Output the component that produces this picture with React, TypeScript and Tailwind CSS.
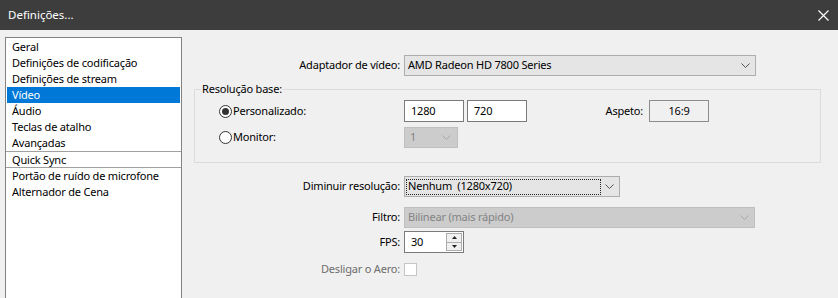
function Chevron({ color }: { color: string }) {
  return (
    <svg width="9" height="5" viewBox="0 0 9 5" className="shrink-0">
      <path d="M0.5 0.5 L4.5 4.5 L8.5 0.5" fill="none" stroke={color} strokeWidth="1" />
    </svg>
  );
}

function Radio({ checked }: { checked: boolean }) {
  return (
    <div className="w-[13px] h-[13px] rounded-full border border-[#333333] bg-white flex items-center justify-center shrink-0">
      {checked && <div className="w-[7px] h-[7px] rounded-full bg-[#333333]" />}
    </div>
  );
}

export default function App() {
  const items = [
    "Geral",
    "Definições de codificação",
    "Definições de stream",
    "Vídeo",
    "Áudio",
    "Teclas de atalho",
    "Avançadas",
  ];
  return (
    <div className="w-[838px] h-[298px] overflow-hidden bg-[#f0f0f0] font-['Noto_Sans',sans-serif] text-[11px] tracking-[-0.2px] text-black flex flex-col">
      <div className="h-[30px] bg-[#3d3d3d] flex items-center justify-between pl-[8px] pr-[9px] shrink-0">
        <span className="text-white text-[11.5px] tracking-normal leading-none">Definições...</span>
        <svg width="11" height="11" viewBox="0 0 11 11">
          <path d="M0.5 0.5L10.5 10.5M10.5 0.5L0.5 10.5" stroke="#ffffff" strokeWidth="1.2" />
        </svg>
      </div>
      <div className="flex flex-1 min-h-0">
        <div className="ml-[5px] mt-[7px] w-[177px] h-[300px] shrink-0 border border-[#828282] bg-white pt-[1px] px-[1px]">
          {items.map((it) => (
            <div
              key={it}
              className={
                it === "Vídeo"
                  ? "h-[16px] leading-[16px] pl-[5px] bg-[#0078d7] text-white whitespace-nowrap"
                  : "h-[16px] leading-[16px] pl-[5px] whitespace-nowrap"
              }
            >
              {it}
            </div>
          ))}
          <div className="h-[1px] bg-[#a0a0a0] -mx-[1px]" />
          <div className="h-[15px] leading-[15px] pl-[5px] whitespace-nowrap">Quick Sync</div>
          <div className="h-[1px] bg-[#a0a0a0] -mx-[1px]" />
          <div className="h-[16px] leading-[16px] pl-[5px] whitespace-nowrap">Portão de ruído de microfone</div>
          <div className="h-[16px] leading-[16px] pl-[5px] whitespace-nowrap">Alternador de Cena</div>
        </div>

        <div className="flex-1 pl-[12px] pt-[25px] flex flex-col">
          {/* Adaptador */}
          <div className="flex items-center h-[21px]">
            <div className="w-[210px] text-right pr-[4px] whitespace-nowrap">Adaptador de vídeo:</div>
            <div className="w-[352px] h-[21px] bg-[#e5e5e5] border border-[#adadad] flex items-center justify-between pl-[3px] pr-[5px]">
              <span className="whitespace-nowrap">AMD Radeon HD 7800 Series</span>
              <Chevron color="#555555" />
            </div>
          </div>

          {/* Group */}
          <div className="relative mt-[13px] w-[627px] h-[74px] border border-[#dcdcdc] pt-[10px]">
            <span className="absolute top-[-9px] left-[6px] bg-[#f0f0f0] px-[1px] leading-[16px] whitespace-nowrap">
              Resolução base:
            </span>
            <div className="flex items-center h-[22px]">
              <div className="w-[209px] pl-[24px] flex items-center">
                <Radio checked />
                <span className="ml-[1px] whitespace-nowrap">Personalizado:</span>
              </div>
              <div className="w-[60px] h-[22px] bg-white border border-[#7a7a7a] pl-[6px] flex items-center">1280</div>
              <div className="ml-[3px] w-[60px] h-[22px] bg-white border border-[#7a7a7a] pl-[6px] flex items-center">720</div>
              <div className="w-[122px] text-right pr-[6px] whitespace-nowrap">Aspeto:</div>
              <div className="w-[60px] h-[22px] border border-[#8c8c8c] flex items-center justify-center">16:9</div>
            </div>
            <div className="flex items-center h-[21px] mt-[5px]">
              <div className="w-[209px] pl-[24px] flex items-center">
                <Radio checked={false} />
                <span className="ml-[1px] whitespace-nowrap">Monitor:</span>
              </div>
              <div className="w-[54px] h-[21px] bg-[#cccccc] border border-[#bfbfbf] flex items-center justify-between pl-[5px] pr-[6px] text-[#838383]">
                <span>1</span>
                <Chevron color="#a6a6a6" />
              </div>
            </div>
          </div>

          {/* Diminuir */}
          <div className="flex items-center h-[21px] mt-[13px]">
            <div className="w-[210px] text-right pr-[4px] whitespace-nowrap">Diminuir resolução:</div>
            <div className="w-[216px] h-[21px] bg-[#e5e5e5] border border-[#adadad] flex items-center justify-between pl-[1px] pr-[5px]">
              <div className="w-[195px] h-[16px] border border-dotted border-[#222222] flex items-center pl-[1px] whitespace-nowrap">
                Nenhum&nbsp;&nbsp;(1280x720)
              </div>
              <Chevron color="#555555" />
            </div>
          </div>

          {/* Filtro */}
          <div className="flex items-center h-[21px] mt-[10px]">
            <div className="w-[210px] text-right pr-[4px] whitespace-nowrap">Filtro:</div>
            <div className="w-[351px] h-[21px] bg-[#cccccc] border border-[#bfbfbf] flex items-center justify-between pl-[3px] pr-[5px] text-[#838383]">
              <span className="whitespace-nowrap">Bilinear (mais rápido)</span>
              <Chevron color="#a6a6a6" />
            </div>
          </div>

          {/* FPS */}
          <div className="flex items-center h-[22px] mt-[3px]">
            <div className="w-[210px] text-right pr-[4px] whitespace-nowrap">FPS:</div>
            <div className="w-[60px] h-[22px] bg-white border border-[#7a7a7a] flex items-stretch">
              <div className="flex-1 pl-[6px] flex items-center">30</div>
              <div className="w-[17px] flex flex-col py-[1px] pr-[1px]">
                <div className="flex-1 border border-[#adadad] bg-[#f0f0f0] flex items-center justify-center">
                  <svg width="5" height="3" viewBox="0 0 5 3">
                    <path d="M0 3 L2.5 0 L5 3 Z" fill="#222222" />
                  </svg>
                </div>
                <div className="flex-1 border border-t-0 border-[#adadad] bg-[#f0f0f0] flex items-center justify-center">
                  <svg width="5" height="3" viewBox="0 0 5 3">
                    <path d="M0 0 L2.5 3 L5 0 Z" fill="#222222" />
                  </svg>
                </div>
              </div>
            </div>
          </div>

          {/* Desligar o Aero */}
          <div className="flex items-center h-[13px] mt-[10px]">
            <div className="w-[210px] text-right pr-[4px] whitespace-nowrap text-[#6d6d6d]">Desligar o Aero:</div>
            <div className="w-[13px] h-[13px] bg-white border border-[#c5c5c5]" />
          </div>
        </div>
      </div>
    </div>
  );
}
